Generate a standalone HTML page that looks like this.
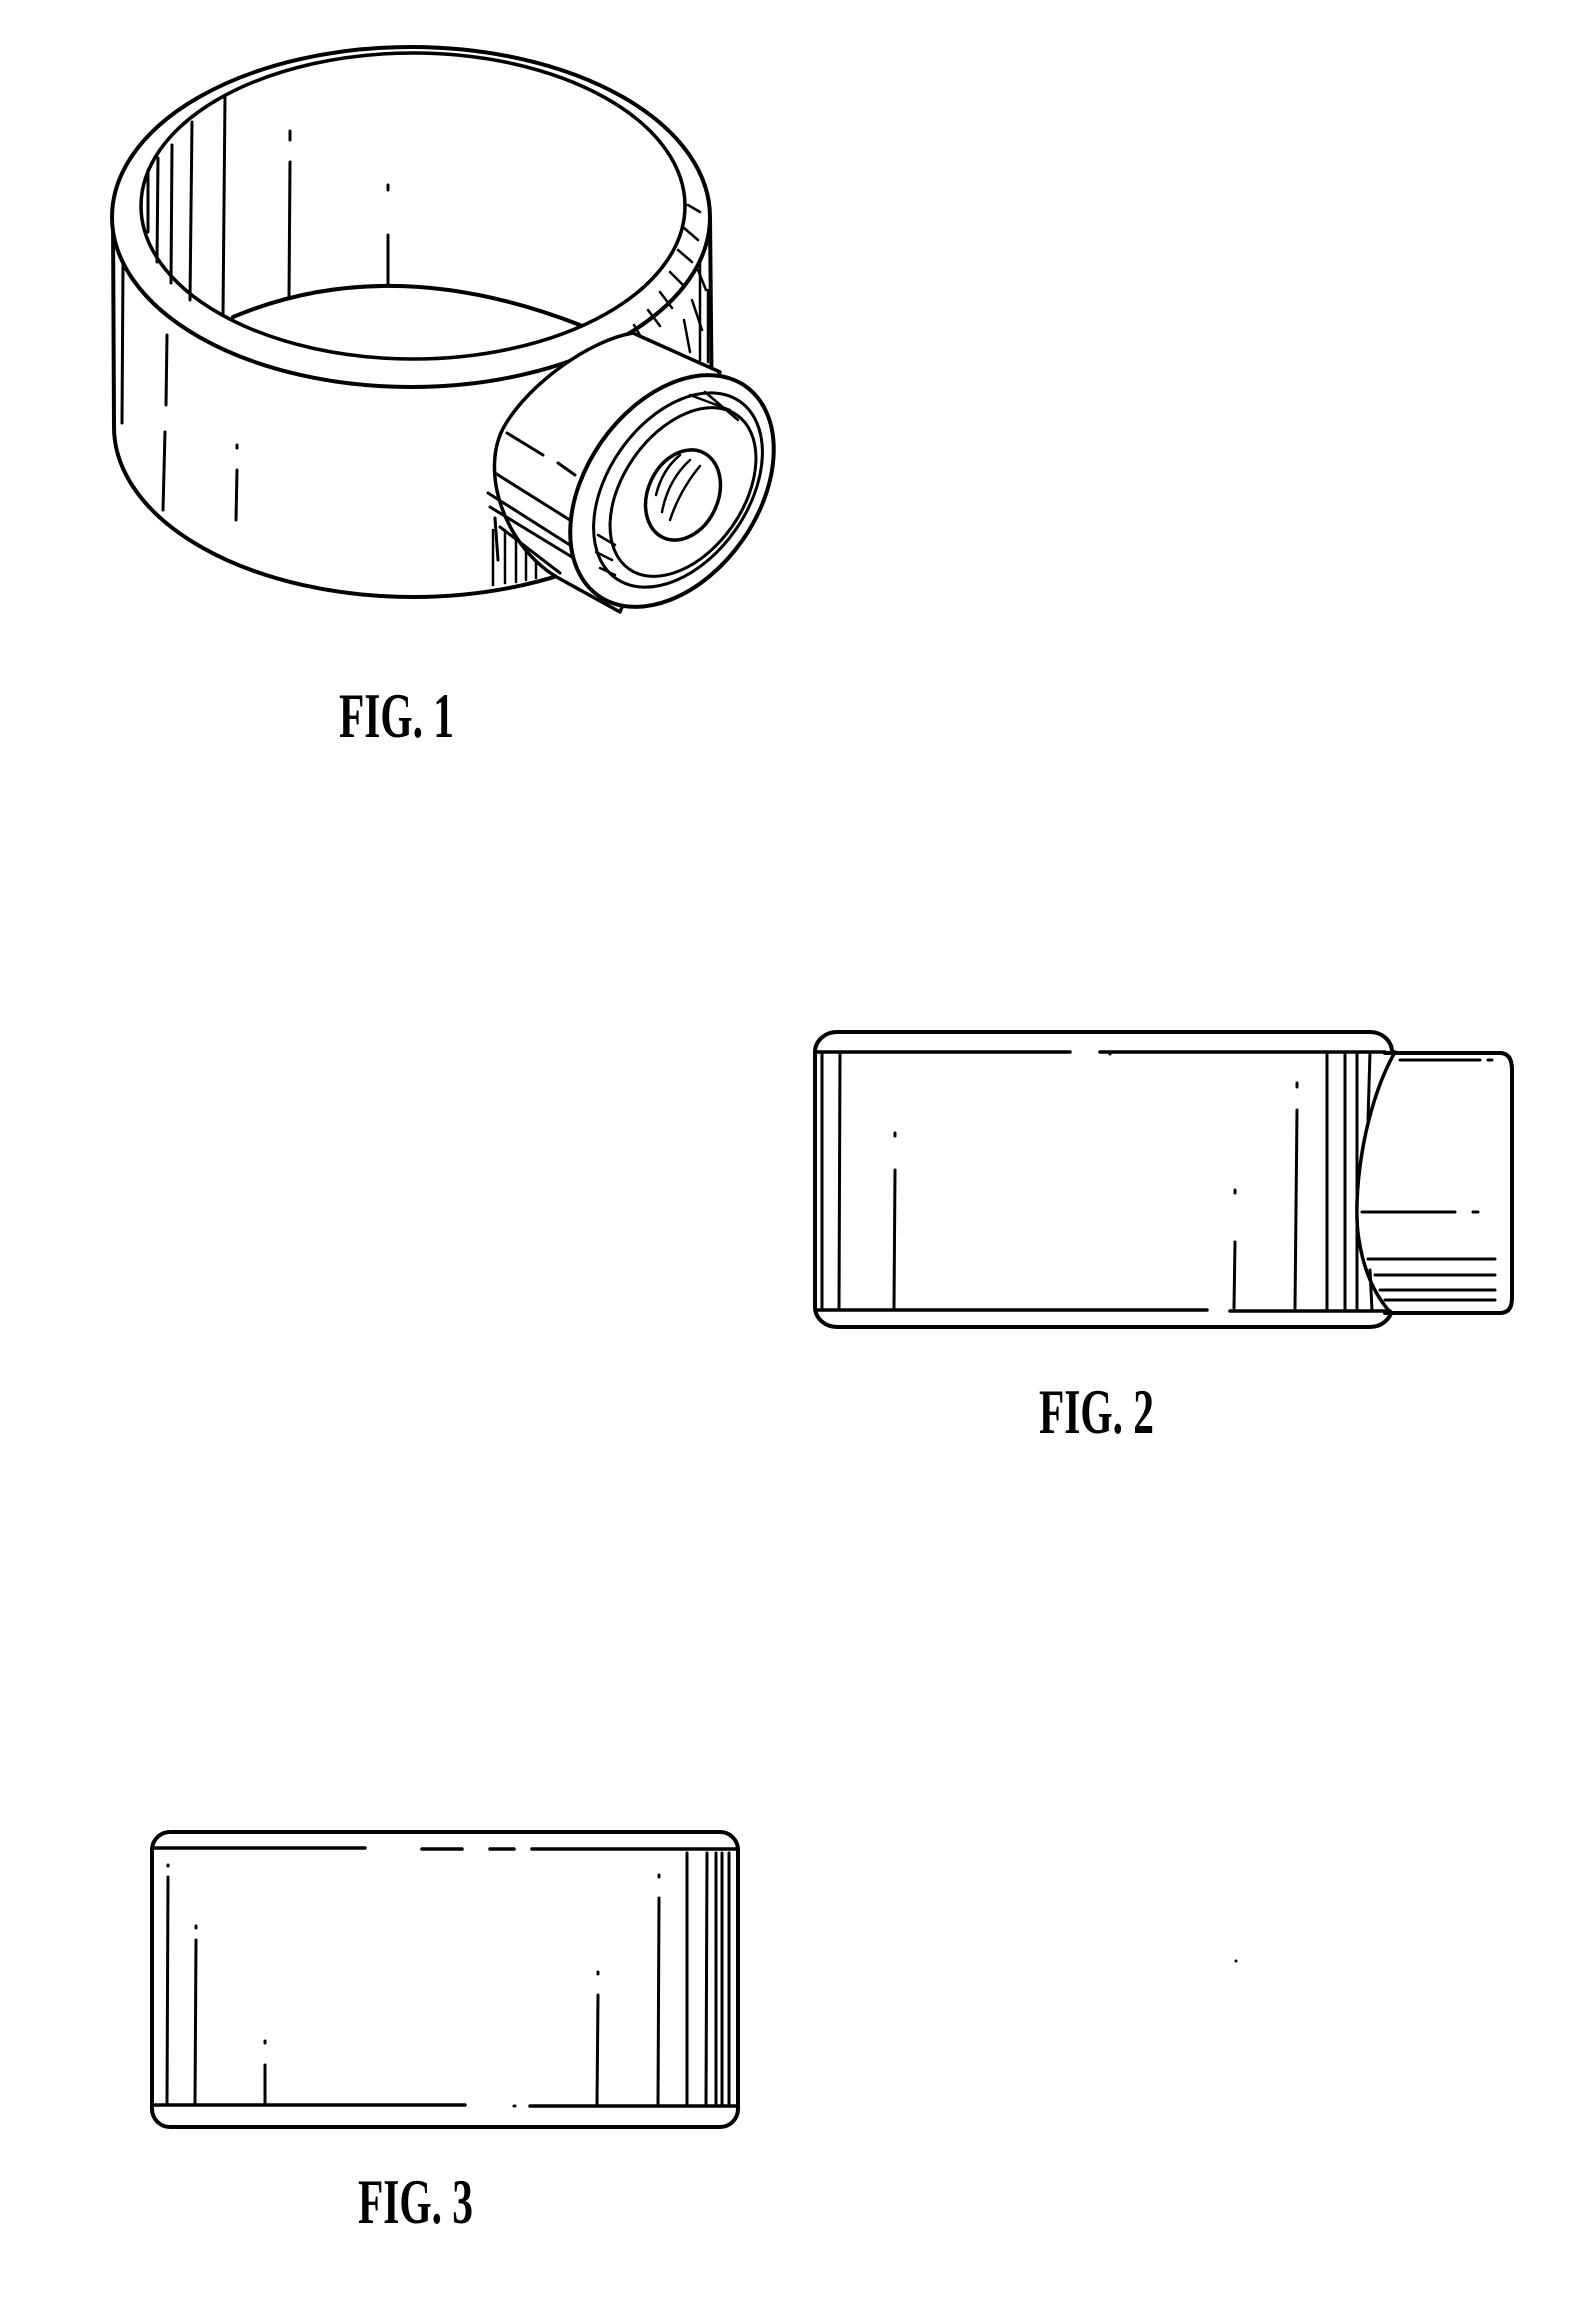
<!DOCTYPE html>
<html><head><meta charset="utf-8"><style>
html,body{margin:0;padding:0;background:#fff;}
svg{display:block;}
</style></head><body>
<svg width="1581" height="2307" viewBox="0 0 1581 2307" xmlns="http://www.w3.org/2000/svg">
<g fill="none" stroke="#000" stroke-linecap="round" stroke-linejoin="round">
<!-- FIG 1 ring -->
<path d="M113,217 L114,427 A299,170 0 0 0 712,427 L710,217" stroke-width="4" fill="#fff"/>
<ellipse cx="411" cy="217" rx="299" ry="170" stroke-width="4" fill="#fff"/>
<ellipse cx="413" cy="206" rx="272" ry="153" stroke-width="3.5"/>
<path d="M233,317 Q390,251 580,325" stroke-width="4"/>
<!-- inner left vertical lines -->
<path d="M148,170 L148,232 M158,158 L157,262 M172,145 L171,283 M192,122 L190,300 M225,96 L223,315" stroke-width="3"/>
<path d="M290,131 L290,140 M290,162 L289,298 M388,185 L388,190 M388,235 L388,284" stroke-width="3"/>
<!-- outer side lines -->
<path d="M123,265 L122,423 M167,335 L166,405 M165,432 L163,510 M237,445 L237,448 M237,470 L236,520" stroke-width="3"/>
<!-- rim hatching right back -->
<path d="M688,205 L700,212 M684,228 L698,240 M678,250 L692,262 M670,272 L684,286 M660,292 L672,308 M648,310 L660,326 M634,325 L644,342 M618,338 L626,356 M600,346 L606,366 M585,352 L590,373 M698,270 L706,290 M692,300 L702,330 M684,320 L690,352" stroke-width="2.5"/>
<path d="M700,262 L700,360 M708,290 L708,362" stroke-width="2.5"/>
<!-- lines under boss -->
<path d="M493,530 L493,585 M505,530 L505,583 M516,540 L516,582 M526,545 L526,580 M536,552 L536,578" stroke-width="2.5"/>
<!-- boss body -->
<path d="M633,333 L720,372 L620,612 L562,580 C505,550 478,470 505,425 C530,383 590,340 633,333 Z" fill="#fff" stroke-width="3.5"/>
<path d="M507,433 L543,455 M558,463 L575,475 M495,473 L573,522 M488,493 L573,547 M490,507 L572,557 M500,527 L560,573 M495,518 L498,560" stroke-width="3"/>
<!-- boss face -->
<ellipse cx="672" cy="491" rx="86" ry="128" transform="rotate(35 672 491)" fill="#fff" stroke-width="4"/>
<ellipse cx="678" cy="490" rx="70" ry="108" transform="rotate(35 678 490)" stroke-width="3"/>
<ellipse cx="683" cy="492" rx="60" ry="94" transform="rotate(35 683 492)" stroke-width="3"/>
<ellipse cx="683" cy="495" rx="35" ry="47" transform="rotate(25 683 495)" stroke-width="3.5"/>
<path d="M656,495 Q662,470 680,455 M662,512 Q668,480 690,460 M670,520 Q680,490 700,466" stroke-width="2.5"/>
<path d="M598,535 L615,545 M596,552 L612,560 M600,568 L615,575 M690,395 L730,410 M705,392 L738,420" stroke-width="2.5"/>
<text x="339" y="737" font-family="'Liberation Serif',serif" font-weight="bold" font-size="64" textLength="115" lengthAdjust="spacingAndGlyphs" fill="#000" stroke="none">FIG. 1</text>

<!-- FIG 2 -->
<rect x="815" y="1032" width="577" height="295" rx="22" ry="20" stroke-width="4"/>
<path d="M1385,1053 L1500,1053 Q1512,1053 1512,1070 L1512,1298 Q1512,1313 1500,1313 L1385,1313" stroke-width="4" fill="#fff"/>
<path d="M1395,1052 C1362,1110 1352,1200 1359,1240 C1364,1272 1375,1295 1390,1312" stroke-width="3.5"/>
<path d="M816,1052 L1070,1052 M1100,1052 L1385,1052 M816,1310 L1207,1310 M1230,1311 L1390,1311" stroke-width="3.5"/>
<path d="M822,1052 L822,1310 M840,1052 L839,1310 M1327,1052 L1327,1310 M1345,1052 L1345,1310 M1357,1052 L1357,1310 M1370,1052 L1368,1120 M1370,1270 L1372,1310" stroke-width="3"/>
<path d="M895,1133 L895,1136 M895,1170 L894,1308 M1297,1083 L1297,1087 M1297,1110 L1295,1308 M1235,1190 L1235,1193 M1235,1242 L1234,1308 M1110,1052 L1110,1054" stroke-width="3"/>
<path d="M1400,1060 L1480,1060 M1488,1060 L1492,1060 M1362,1212 L1455,1212 M1473,1212 L1478,1212 M1368,1259 L1495,1259 M1375,1275 L1495,1275 M1380,1290 L1495,1290 M1385,1300 L1495,1300" stroke-width="3"/>
<text x="1039" y="1433" font-family="'Liberation Serif',serif" font-weight="bold" font-size="64" textLength="115" lengthAdjust="spacingAndGlyphs" fill="#000" stroke="none">FIG. 2</text>

<!-- FIG 3 -->
<rect x="152" y="1832" width="586" height="295" rx="18" ry="18" stroke-width="4"/>
<path d="M152,1848 L365,1848 M422,1849 L462,1849 M490,1849 L514,1849 M532,1849 L738,1849 M152,2105 L465,2105 M530,2106 L738,2106" stroke-width="3.5"/>
<path d="M168,1865 L168,1866 M168,1877 L167,2105 M196,1926 L196,1928 M196,1940 L195,2105 M265,2041 L265,2043 M265,2065 L265,2105 M598,1972 L598,1974 M598,1995 L597,2105 M659,1875 L659,1877 M659,1898 L658,2105 M687,1853 L687,2105 M707,1853 L706,2105 M716,1853 L716,2105 M722,1853 L722,2105 M729,1853 L729,2105 M514,2106 L515,2106" stroke-width="3"/>
<circle cx="1236" cy="1961" r="1" fill="#000" stroke-width="1"/>
<text x="358" y="2223" font-family="'Liberation Serif',serif" font-weight="bold" font-size="64" textLength="115" lengthAdjust="spacingAndGlyphs" fill="#000" stroke="none">FIG. 3</text>
</g>
</svg>
</body></html>
